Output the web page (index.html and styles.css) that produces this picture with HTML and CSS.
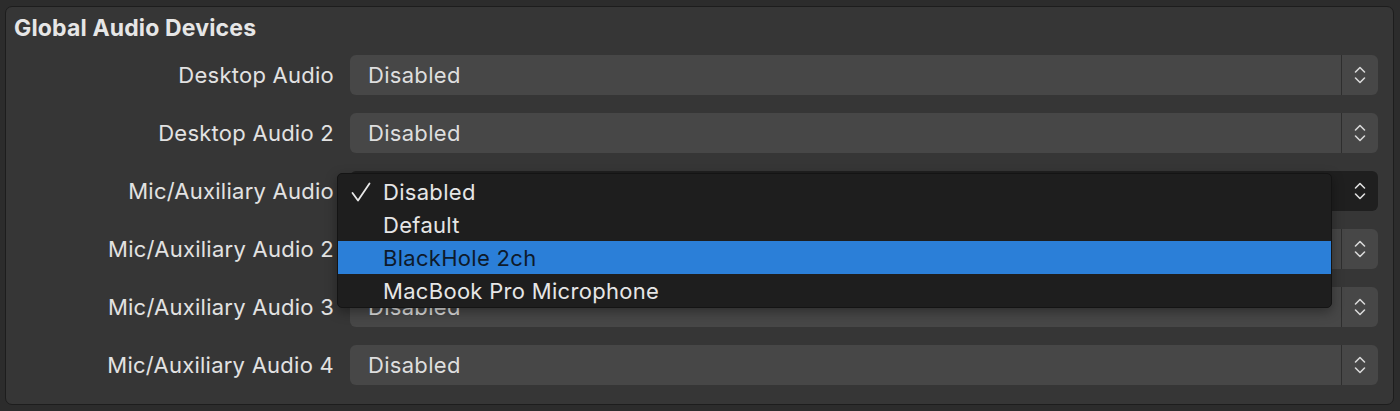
FILE: index.html
```html
<!DOCTYPE html>
<html>
<head>
<meta charset="utf-8">
<link rel="stylesheet" href="styles.css">
</head>
<body>
<div class="panel">
  <div class="title">Global Audio Devices</div>
  <div class="form">
    <div class="label">Desktop Audio</div>
    <div class="select"><span class="value">Disabled</span><span class="stepper"><svg width="14" height="24" viewBox="0 0 14 24"><path d="M2.5 9 L7 4.5 L11.5 9 M2.5 15 L7 19.5 L11.5 15" fill="none" stroke="#d8d8d8" stroke-width="1.6" stroke-linecap="round" stroke-linejoin="round"/></svg></span></div>

    <div class="label">Desktop Audio 2</div>
    <div class="select"><span class="value">Disabled</span><span class="stepper"><svg width="14" height="24" viewBox="0 0 14 24"><path d="M2.5 9 L7 4.5 L11.5 9 M2.5 15 L7 19.5 L11.5 15" fill="none" stroke="#d8d8d8" stroke-width="1.6" stroke-linecap="round" stroke-linejoin="round"/></svg></span></div>

    <div class="label">Mic/Auxiliary Audio</div>
    <div class="select open"><span class="value">Disabled</span><span class="stepper"><svg width="14" height="24" viewBox="0 0 14 24"><path d="M2.5 9 L7 4.5 L11.5 9 M2.5 15 L7 19.5 L11.5 15" fill="none" stroke="#e0e0e0" stroke-width="1.6" stroke-linecap="round" stroke-linejoin="round"/></svg></span></div>

    <div class="label">Mic/Auxiliary Audio 2</div>
    <div class="select"><span class="value">Disabled</span><span class="stepper"><svg width="14" height="24" viewBox="0 0 14 24"><path d="M2.5 9 L7 4.5 L11.5 9 M2.5 15 L7 19.5 L11.5 15" fill="none" stroke="#d8d8d8" stroke-width="1.6" stroke-linecap="round" stroke-linejoin="round"/></svg></span></div>

    <div class="label">Mic/Auxiliary Audio 3</div>
    <div class="select"><span class="value">Disabled</span><span class="stepper"><svg width="14" height="24" viewBox="0 0 14 24"><path d="M2.5 9 L7 4.5 L11.5 9 M2.5 15 L7 19.5 L11.5 15" fill="none" stroke="#d8d8d8" stroke-width="1.6" stroke-linecap="round" stroke-linejoin="round"/></svg></span></div>

    <div class="label">Mic/Auxiliary Audio 4</div>
    <div class="select"><span class="value">Disabled</span><span class="stepper"><svg width="14" height="24" viewBox="0 0 14 24"><path d="M2.5 9 L7 4.5 L11.5 9 M2.5 15 L7 19.5 L11.5 15" fill="none" stroke="#d8d8d8" stroke-width="1.6" stroke-linecap="round" stroke-linejoin="round"/></svg></span></div>
  </div>

  <div class="menu">
    <div class="item"><span class="check"><svg width="22" height="22" viewBox="0 0 22 22"><path d="M2.5 12 L8 19.5 L19.5 2.5" fill="none" stroke="#e8e8e8" stroke-width="1.8" stroke-linecap="round" stroke-linejoin="round"/></svg></span>Disabled</div>
    <div class="item"><span class="check"></span>Default</div>
    <div class="item active"><span class="check"></span>BlackHole 2ch</div>
    <div class="item"><span class="check"></span>MacBook Pro Microphone</div>
  </div>
</div>
</body>
</html>
```

FILE: styles.css
```css
html, body {
  margin: 0;
  padding: 0;
  background: #2c2c2c;
  width: 1400px;
  height: 411px;
  overflow: hidden;
  font-family: Inter, "Liberation Sans", sans-serif;
}

.panel {
  position: relative;
  margin: 6px 6px 0 5px;
  height: 399px;
  box-sizing: border-box;
  border: 1px solid #1d1d1d;
  border-radius: 7px;
  background: #363636;
}

.title {
  padding: 7px 0 0 8px;
  height: 39px;
  box-sizing: border-box;
  font-size: 23px;
  font-weight: 700;
  color: #e6e6e6;
  letter-spacing: 0.15px;
}

.form {
  display: grid;
  grid-template-columns: 328px 1028px;
  column-gap: 16px;
  row-gap: 18px;
  padding-top: 9px;
}

.label {
  height: 40px;
  line-height: 40px;
  text-align: right;
  font-size: 22px;
  letter-spacing: 0.25px;
  color: #e2e2e2;
}

.select {
  height: 40px;
  display: flex;
  border-radius: 6px;
  background: #474747;
  color: #dedede;
  font-size: 22px;
  letter-spacing: 0.3px;
  overflow: hidden;
}

.select .value {
  flex: 1;
  line-height: 40px;
  padding-left: 18px;
  border-right: 1px solid #2e2e2e;
}

.select .stepper {
  width: 36px;
  display: flex;
  align-items: center;
  justify-content: center;
}

.select.open {
  background: #1f1f1f;
}

.select.open .value {
  border-right: none;
}

.menu {
  position: absolute;
  left: 331px;
  top: 166px;
  width: 995px;
  box-sizing: border-box;
  padding: 1px 0 0;
  background: #1e1e1e;
  border: 1px solid #141414;
  border-radius: 5px;
  box-shadow: 0 4px 12px rgba(0, 0, 0, 0.35);
}

.item {
  height: 33px;
  display: flex;
  align-items: center;
  font-size: 22px;
  letter-spacing: 0.3px;
  color: #e6e6e6;
}

.item .check {
  width: 45px;
  display: flex;
  justify-content: center;
  box-sizing: border-box;
}

.item.active {
  background: #2b7fd8;
  color: #0e1a2b;
}
```
